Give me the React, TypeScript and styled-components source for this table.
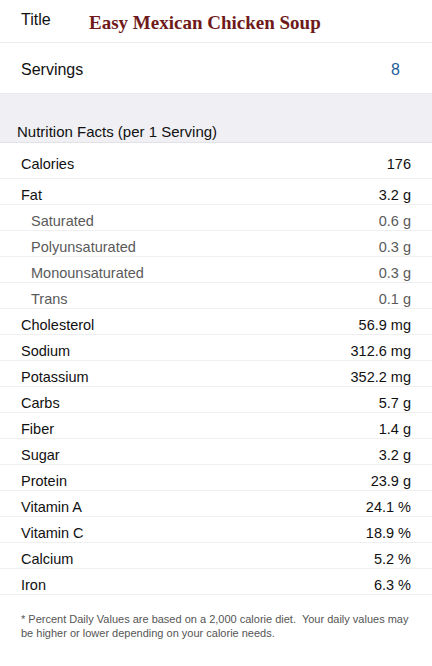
import React from 'react';
import styled, { createGlobalStyle } from 'styled-components';

const GlobalStyle = createGlobalStyle`
  *, *::before, *::after {
    box-sizing: border-box;
  }
  html, body {
    margin: 0;
    padding: 0;
    background: #ffffff;
  }
  body {
    font-family: 'Liberation Sans', Arial, sans-serif;
    color: #111;
  }
`;

const Page = styled.div`
  width: 432px;
  background: #fff;
`;

const TopRow = styled.div<{ height: number }>`
  display: flex;
  align-items: center;
  height: ${p => p.height}px;
  padding: 3px 32px 0 21px;
  border-bottom: 1px solid #ececef;
  font-size: 16px;
  color: #111;
`;

const TopLabel = styled.span`
  width: 68px;
  margin-bottom: 5px;
`;

const RecipeTitle = styled.span`
  font-family: 'Liberation Serif', 'DejaVu Serif', serif;
  font-weight: bold;
  font-size: 19px;
  color: #6f1a1a;
  margin-top: 1px;
`;

const ServingsValue = styled.span`
  margin-left: auto;
  color: #1f5d99;
`;

const SectionHeader = styled.div`
  display: flex;
  align-items: flex-end;
  height: 49px;
  padding: 0 0 2px 17px;
  background: #efeff4;
  border-bottom: 1px solid #e2e2e6;
  font-size: 15px;
  color: #111;
`;

const Row = styled.div<{ tall?: boolean; sub?: boolean }>`
  display: flex;
  justify-content: space-between;
  align-items: center;
  height: ${p => (p.tall ? 36 : 26)}px;
  padding: 6px 21px 0 ${p => (p.sub ? 31 : 21)}px;
  border-bottom: 1px solid #efeff1;
  font-size: 14.5px;
  color: ${p => (p.sub ? '#5a5a5a' : '#111')};
`;

const Footnote = styled.p`
  margin: 0;
  padding: 17px 21px 16px 21px;
  font-size: 11px;
  line-height: 14px;
  color: #555;
`;

type Item = { label: string; value: string; sub?: boolean };

const items: Item[] = [
  { label: 'Fat', value: '3.2 g' },
  { label: 'Saturated', value: '0.6 g', sub: true },
  { label: 'Polyunsaturated', value: '0.3 g', sub: true },
  { label: 'Monounsaturated', value: '0.3 g', sub: true },
  { label: 'Trans', value: '0.1 g', sub: true },
  { label: 'Cholesterol', value: '56.9 mg' },
  { label: 'Sodium', value: '312.6 mg' },
  { label: 'Potassium', value: '352.2 mg' },
  { label: 'Carbs', value: '5.7 g' },
  { label: 'Fiber', value: '1.4 g' },
  { label: 'Sugar', value: '3.2 g' },
  { label: 'Protein', value: '23.9 g' },
  { label: 'Vitamin A', value: '24.1 %' },
  { label: 'Vitamin C', value: '18.9 %' },
  { label: 'Calcium', value: '5.2 %' },
  { label: 'Iron', value: '6.3 %' },
];

const App: React.FC = () => {
  return (
    <Page>
      <GlobalStyle />
      <TopRow height={43}>
        <TopLabel>Title</TopLabel>
        <RecipeTitle>Easy Mexican Chicken Soup</RecipeTitle>
      </TopRow>
      <TopRow height={51}>
        <span>Servings</span>
        <ServingsValue>8</ServingsValue>
      </TopRow>
      <SectionHeader>Nutrition Facts (per 1 Serving)</SectionHeader>
      <Row tall>
        <span>Calories</span>
        <span>176</span>
      </Row>
      {items.map(item => (
        <Row key={item.label} sub={item.sub}>
          <span>{item.label}</span>
          <span>{item.value}</span>
        </Row>
      ))}
      <Footnote>
        * Percent Daily Values are based on a 2,000 calorie diet.&nbsp; Your daily values may be
        higher or lower depending on your calorie needs.
      </Footnote>
    </Page>
  );
};

export default App;
